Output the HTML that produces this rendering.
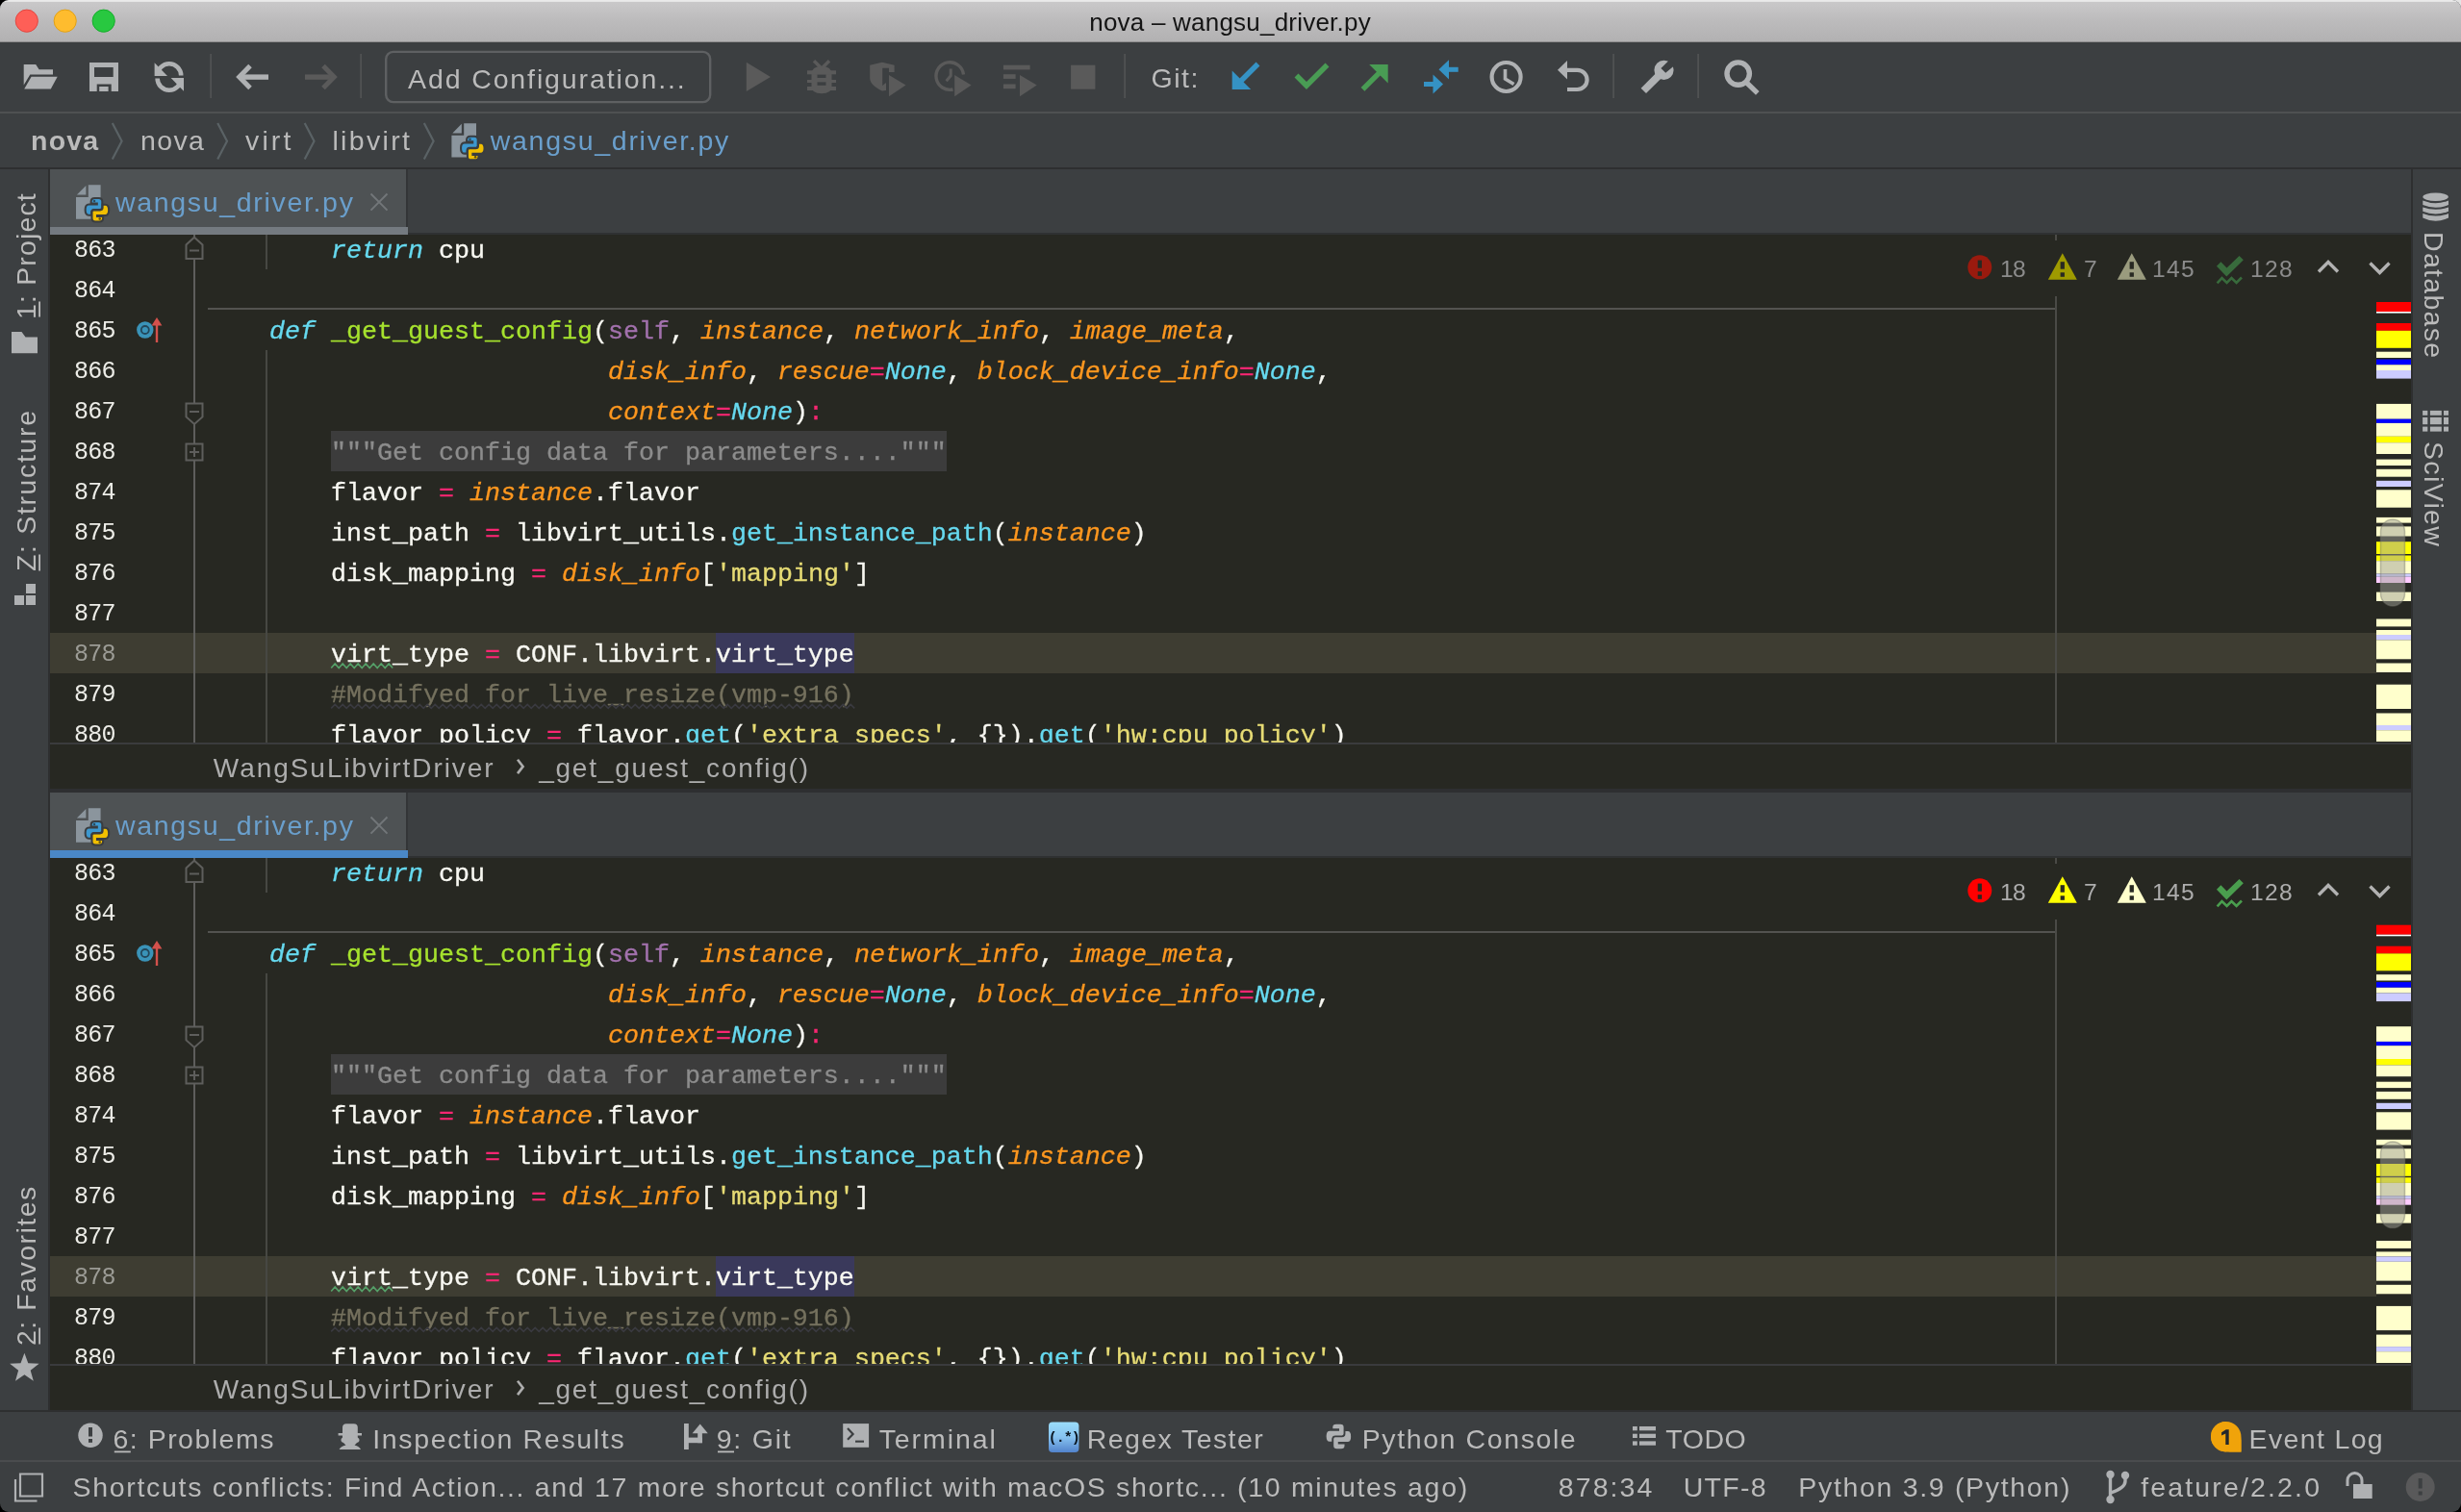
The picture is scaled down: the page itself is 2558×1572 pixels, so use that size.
<!DOCTYPE html>
<html><head><meta charset="utf-8"><title>nova – wangsu_driver.py</title>
<style>html,body{margin:0;padding:0;width:2558px;height:1572px;overflow:hidden;background:#000000}</style>
</head><body>
<div style="position:absolute;left:2538px;top:0;width:20px;height:20px;background:#e4e4e4"></div><div style="position:absolute;left:0;top:0;width:2558px;height:1572px;background:#3C3F41;border-radius:9px;overflow:hidden;will-change:transform"><div style="position:absolute;left:0px;top:0px;width:2558px;height:44px;background:linear-gradient(#ececec 0px,#e6e6e6 1.5px,#c9c8c9 2.5px,#bdbcbd 20px,#b2b1b2 43px);"></div><div style="position:absolute;left:0px;top:43px;width:2558px;height:1px;background:#8e8d8e;"></div><svg style="position:absolute;left:13px;top:8px" width="28" height="28" viewBox="0 0 28 28"><circle cx="14.8" cy="13.7" r="11.6" fill="#fe5f57" stroke="#e2463f" stroke-width="1"/></svg><svg style="position:absolute;left:53px;top:8px" width="28" height="28" viewBox="0 0 28 28"><circle cx="14.700000000000003" cy="13.7" r="11.6" fill="#febc2e" stroke="#e1a116" stroke-width="1"/></svg><svg style="position:absolute;left:93px;top:8px" width="28" height="28" viewBox="0 0 28 28"><circle cx="14.700000000000003" cy="13.7" r="11.6" fill="#28c840" stroke="#14ae2a" stroke-width="1"/></svg><div style="position:absolute;font-family:'Liberation Sans', sans-serif;font-size:26px;line-height:26px;height:26px;color:#141414;font-weight:400;white-space:pre;letter-spacing:0.218px;left:1132.23px;top:10.19px;">nova – wangsu_driver.py</div><div style="position:absolute;left:0px;top:116px;width:2558px;height:2px;background:#4f5152;"></div><div style="position:absolute;left:0px;top:174px;width:2558px;height:2px;background:#2E2F30;"></div><div style="position:absolute;left:50px;top:176px;width:2px;height:1290px;background:#2E2F30;"></div><div style="position:absolute;left:2506px;top:176px;width:2px;height:1290px;background:#2E2F30;"></div><div style="position:absolute;font-family:'Liberation Sans', sans-serif;font-size:28.5px;line-height:28.5px;height:28.5px;color:#BBBBBB;font-weight:400;white-space:pre;letter-spacing:1.883px;left:424.02px;top:68.17px;">Add Configuration...</div><div style="position:absolute;font-family:'Liberation Sans', sans-serif;font-size:28.5px;line-height:28.5px;height:28.5px;color:#BBBBBB;font-weight:400;white-space:pre;letter-spacing:1.584px;left:1196.42px;top:66.77px;">Git:</div><div style="position:absolute;font-family:'Liberation Sans', sans-serif;font-size:28.5px;line-height:28.5px;height:28.5px;color:#BBBBBB;font-weight:700;white-space:pre;letter-spacing:1.121px;left:32.12px;top:132.07px;">nova</div><div style="position:absolute;font-family:'Liberation Sans', sans-serif;font-size:28.5px;line-height:28.5px;height:28.5px;color:#BBBBBB;font-weight:400;white-space:pre;letter-spacing:1.361px;left:146.02px;top:132.07px;">nova</div><div style="position:absolute;font-family:'Liberation Sans', sans-serif;font-size:28.5px;line-height:28.5px;height:28.5px;color:#BBBBBB;font-weight:400;white-space:pre;letter-spacing:3.132px;left:255.02px;top:132.07px;">virt</div><div style="position:absolute;font-family:'Liberation Sans', sans-serif;font-size:28.5px;line-height:28.5px;height:28.5px;color:#BBBBBB;font-weight:400;white-space:pre;letter-spacing:2.330px;left:345.42px;top:132.07px;">libvirt</div><div style="position:absolute;font-family:'Liberation Sans', sans-serif;font-size:28.5px;line-height:28.5px;height:28.5px;color:#6A9FCC;font-weight:400;white-space:pre;letter-spacing:1.720px;left:509.72px;top:132.07px;">wangsu_driver.py</div><div style="position:absolute;left:52px;top:176px;width:370px;height:60px;background:#4E5254;"></div><div style="position:absolute;left:422px;top:176px;width:2px;height:60px;background:#333537;"></div><div style="position:absolute;left:52px;top:236px;width:372px;height:8px;background:#747A80;"></div><div style="position:absolute;left:424px;top:242px;width:2082px;height:2px;background:#2F3132;"></div><div style="position:absolute;font-family:'Liberation Sans', sans-serif;font-size:28.5px;line-height:28.5px;height:28.5px;color:#6A9FCC;font-weight:400;white-space:pre;letter-spacing:1.680px;left:119.92px;top:195.67px;">wangsu_driver.py</div><div style="position:absolute;left:52px;top:244px;width:2454px;height:528px;background:#272822;"></div><div style="position:absolute;left:52px;top:658px;width:2418px;height:42px;background:#3E3D32;"></div><div style="position:absolute;left:344.0px;top:448px;width:640.0px;height:42px;background:#3C3C3C;"></div><div style="position:absolute;left:744.0px;top:658px;width:144.0px;height:42px;background:#3A395B;"></div><div style="position:absolute;left:52px;top:244px;width:2418px;height:528px;overflow:hidden"><div style="position:absolute;left:25.0px;top:-4.2px;height:42px;line-height:42px;font-family:'Liberation Mono', monospace;font-size:25px;letter-spacing:-0.7px;color:#EDEDE8;white-space:pre">863</div><div style="position:absolute;left:164px;top:-4.5px;height:42px;line-height:42px;font-family:'Liberation Mono', monospace;font-size:26.67px;white-space:pre;-webkit-text-stroke:0.3px currentColor"><span style="color:#F8F8F2">        </span><span style="color:#66D9EF;font-style:italic">return</span><span style="color:#F8F8F2"> cpu</span></div><div style="position:absolute;left:25.0px;top:37.8px;height:42px;line-height:42px;font-family:'Liberation Mono', monospace;font-size:25px;letter-spacing:-0.7px;color:#EDEDE8;white-space:pre">864</div><div style="position:absolute;left:164px;top:37.5px;height:42px;line-height:42px;font-family:'Liberation Mono', monospace;font-size:26.67px;white-space:pre;-webkit-text-stroke:0.3px currentColor"></div><div style="position:absolute;left:25.0px;top:79.8px;height:42px;line-height:42px;font-family:'Liberation Mono', monospace;font-size:25px;letter-spacing:-0.7px;color:#EDEDE8;white-space:pre">865</div><div style="position:absolute;left:164px;top:79.5px;height:42px;line-height:42px;font-family:'Liberation Mono', monospace;font-size:26.67px;white-space:pre;-webkit-text-stroke:0.3px currentColor"><span style="color:#F8F8F2">    </span><span style="color:#66D9EF;font-style:italic">def</span><span style="color:#F8F8F2"> </span><span style="color:#A6E22E">_get_guest_config</span><span style="color:#F8F8F2">(</span><span style="color:#A271AD">self</span><span style="color:#F8F8F2">, </span><span style="color:#FD971F;font-style:italic">instance</span><span style="color:#F8F8F2">, </span><span style="color:#FD971F;font-style:italic">network_info</span><span style="color:#F8F8F2">, </span><span style="color:#FD971F;font-style:italic">image_meta</span><span style="color:#F8F8F2">,</span></div><div style="position:absolute;left:25.0px;top:121.8px;height:42px;line-height:42px;font-family:'Liberation Mono', monospace;font-size:25px;letter-spacing:-0.7px;color:#EDEDE8;white-space:pre">866</div><div style="position:absolute;left:164px;top:121.5px;height:42px;line-height:42px;font-family:'Liberation Mono', monospace;font-size:26.67px;white-space:pre;-webkit-text-stroke:0.3px currentColor"><span style="color:#F8F8F2">                          </span><span style="color:#FD971F;font-style:italic">disk_info</span><span style="color:#F8F8F2">, </span><span style="color:#FD971F;font-style:italic">rescue</span><span style="color:#F92672">=</span><span style="color:#66D9EF;font-style:italic">None</span><span style="color:#F8F8F2">, </span><span style="color:#FD971F;font-style:italic">block_device_info</span><span style="color:#F92672">=</span><span style="color:#66D9EF;font-style:italic">None</span><span style="color:#F8F8F2">,</span></div><div style="position:absolute;left:25.0px;top:163.8px;height:42px;line-height:42px;font-family:'Liberation Mono', monospace;font-size:25px;letter-spacing:-0.7px;color:#EDEDE8;white-space:pre">867</div><div style="position:absolute;left:164px;top:163.5px;height:42px;line-height:42px;font-family:'Liberation Mono', monospace;font-size:26.67px;white-space:pre;-webkit-text-stroke:0.3px currentColor"><span style="color:#F8F8F2">                          </span><span style="color:#FD971F;font-style:italic">context</span><span style="color:#F92672">=</span><span style="color:#66D9EF;font-style:italic">None</span><span style="color:#F8F8F2">)</span><span style="color:#F92672">:</span></div><div style="position:absolute;left:25.0px;top:205.8px;height:42px;line-height:42px;font-family:'Liberation Mono', monospace;font-size:25px;letter-spacing:-0.7px;color:#EDEDE8;white-space:pre">868</div><div style="position:absolute;left:164px;top:205.5px;height:42px;line-height:42px;font-family:'Liberation Mono', monospace;font-size:26.67px;white-space:pre;-webkit-text-stroke:0.3px currentColor"><span style="color:#F8F8F2">        </span><span style="color:#8C8C8C">"""Get config data for parameters...."""</span></div><div style="position:absolute;left:25.0px;top:247.8px;height:42px;line-height:42px;font-family:'Liberation Mono', monospace;font-size:25px;letter-spacing:-0.7px;color:#EDEDE8;white-space:pre">874</div><div style="position:absolute;left:164px;top:247.5px;height:42px;line-height:42px;font-family:'Liberation Mono', monospace;font-size:26.67px;white-space:pre;-webkit-text-stroke:0.3px currentColor"><span style="color:#F8F8F2">        flavor </span><span style="color:#F92672">=</span><span style="color:#F8F8F2"> </span><span style="color:#FD971F;font-style:italic">instance</span><span style="color:#F8F8F2">.flavor</span></div><div style="position:absolute;left:25.0px;top:289.8px;height:42px;line-height:42px;font-family:'Liberation Mono', monospace;font-size:25px;letter-spacing:-0.7px;color:#EDEDE8;white-space:pre">875</div><div style="position:absolute;left:164px;top:289.5px;height:42px;line-height:42px;font-family:'Liberation Mono', monospace;font-size:26.67px;white-space:pre;-webkit-text-stroke:0.3px currentColor"><span style="color:#F8F8F2">        inst_path </span><span style="color:#F92672">=</span><span style="color:#F8F8F2"> libvirt_utils.</span><span style="color:#66D9EF">get_instance_path</span><span style="color:#F8F8F2">(</span><span style="color:#FD971F;font-style:italic">instance</span><span style="color:#F8F8F2">)</span></div><div style="position:absolute;left:25.0px;top:331.8px;height:42px;line-height:42px;font-family:'Liberation Mono', monospace;font-size:25px;letter-spacing:-0.7px;color:#EDEDE8;white-space:pre">876</div><div style="position:absolute;left:164px;top:331.5px;height:42px;line-height:42px;font-family:'Liberation Mono', monospace;font-size:26.67px;white-space:pre;-webkit-text-stroke:0.3px currentColor"><span style="color:#F8F8F2">        disk_mapping </span><span style="color:#F92672">=</span><span style="color:#F8F8F2"> </span><span style="color:#FD971F;font-style:italic">disk_info</span><span style="color:#F8F8F2">[</span><span style="color:#E6DB74">'mapping'</span><span style="color:#F8F8F2">]</span></div><div style="position:absolute;left:25.0px;top:373.8px;height:42px;line-height:42px;font-family:'Liberation Mono', monospace;font-size:25px;letter-spacing:-0.7px;color:#EDEDE8;white-space:pre">877</div><div style="position:absolute;left:164px;top:373.5px;height:42px;line-height:42px;font-family:'Liberation Mono', monospace;font-size:26.67px;white-space:pre;-webkit-text-stroke:0.3px currentColor"></div><div style="position:absolute;left:25.0px;top:415.8px;height:42px;line-height:42px;font-family:'Liberation Mono', monospace;font-size:25px;letter-spacing:-0.7px;color:#9C9C96;white-space:pre">878</div><div style="position:absolute;left:164px;top:415.5px;height:42px;line-height:42px;font-family:'Liberation Mono', monospace;font-size:26.67px;white-space:pre;-webkit-text-stroke:0.3px currentColor"><span style="color:#F8F8F2">        virt_type </span><span style="color:#F92672">=</span><span style="color:#F8F8F2"> CONF.libvirt.</span><span style="color:#F8F8F2">virt_type</span></div><div style="position:absolute;left:25.0px;top:457.8px;height:42px;line-height:42px;font-family:'Liberation Mono', monospace;font-size:25px;letter-spacing:-0.7px;color:#EDEDE8;white-space:pre">879</div><div style="position:absolute;left:164px;top:457.5px;height:42px;line-height:42px;font-family:'Liberation Mono', monospace;font-size:26.67px;white-space:pre;-webkit-text-stroke:0.3px currentColor"><span style="color:#F8F8F2">        </span><span style="color:#75715E">#Modifyed for live_resize(vmp-916)</span></div><div style="position:absolute;left:25.0px;top:499.8px;height:42px;line-height:42px;font-family:'Liberation Mono', monospace;font-size:25px;letter-spacing:-0.7px;color:#EDEDE8;white-space:pre">880</div><div style="position:absolute;left:164px;top:499.5px;height:42px;line-height:42px;font-family:'Liberation Mono', monospace;font-size:26.67px;white-space:pre;-webkit-text-stroke:0.3px currentColor"><span style="color:#F8F8F2">        flavor_policy </span><span style="color:#F92672">=</span><span style="color:#F8F8F2"> flavor.</span><span style="color:#66D9EF">get</span><span style="color:#F8F8F2">(</span><span style="color:#E6DB74">'extra_specs'</span><span style="color:#F8F8F2">, {}).</span><span style="color:#66D9EF">get</span><span style="color:#F8F8F2">(</span><span style="color:#E6DB74">'hw:cpu_policy'</span><span style="color:#F8F8F2">)</span></div></div><div style="position:absolute;left:2030px;top:250px;width:470px;height:58px;background:#272822;"></div><div style="position:absolute;font-family:'Liberation Sans', sans-serif;font-size:24.6px;line-height:24.6px;height:24.6px;color:#8C8C8C;font-weight:400;white-space:pre;letter-spacing:-0.637px;left:2078.89px;top:268.38px;">18</div><div style="position:absolute;font-family:'Liberation Sans', sans-serif;font-size:24.6px;line-height:24.6px;height:24.6px;color:#8C8C8C;font-weight:400;white-space:pre;letter-spacing:0.000px;left:2165.89px;top:268.38px;">7</div><div style="position:absolute;font-family:'Liberation Sans', sans-serif;font-size:24.6px;line-height:24.6px;height:24.6px;color:#8C8C8C;font-weight:400;white-space:pre;letter-spacing:1.338px;left:2236.89px;top:268.38px;">145</div><div style="position:absolute;font-family:'Liberation Sans', sans-serif;font-size:24.6px;line-height:24.6px;height:24.6px;color:#8C8C8C;font-weight:400;white-space:pre;letter-spacing:1.338px;left:2338.89px;top:268.38px;">128</div><div style="position:absolute;left:52px;top:772px;width:2454px;height:2px;background:#3A3B3D;"></div><div style="position:absolute;left:52px;top:774px;width:2454px;height:46px;background:#272822;"></div><div style="position:absolute;font-family:'Liberation Sans', sans-serif;font-size:28px;line-height:28px;height:28px;color:#ADADAD;font-weight:400;white-space:pre;letter-spacing:1.952px;left:221.84px;top:784.50px;">WangSuLibvirtDriver</div><div style="position:absolute;font-family:'Liberation Sans', sans-serif;font-size:28px;line-height:28px;height:28px;color:#ADADAD;font-weight:400;white-space:pre;letter-spacing:1.802px;left:560.14px;top:784.50px;">_get_guest_config()</div><div style="position:absolute;left:52px;top:820px;width:2454px;height:4px;background:#2E2F31;"></div><div style="position:absolute;left:52px;top:824px;width:370px;height:60px;background:#4E5254;"></div><div style="position:absolute;left:422px;top:824px;width:2px;height:60px;background:#333537;"></div><div style="position:absolute;left:52px;top:884px;width:372px;height:8px;background:#4A88C7;"></div><div style="position:absolute;left:424px;top:890px;width:2082px;height:2px;background:#2F3132;"></div><div style="position:absolute;font-family:'Liberation Sans', sans-serif;font-size:28.5px;line-height:28.5px;height:28.5px;color:#6A9FCC;font-weight:400;white-space:pre;letter-spacing:1.680px;left:119.92px;top:843.67px;">wangsu_driver.py</div><div style="position:absolute;left:52px;top:892px;width:2454px;height:526px;background:#272822;"></div><div style="position:absolute;left:52px;top:1306px;width:2418px;height:42px;background:#3E3D32;"></div><div style="position:absolute;left:344.0px;top:1096px;width:640.0px;height:42px;background:#3C3C3C;"></div><div style="position:absolute;left:744.0px;top:1306px;width:144.0px;height:42px;background:#3A395B;"></div><div style="position:absolute;left:52px;top:892px;width:2418px;height:526px;overflow:hidden"><div style="position:absolute;left:25.0px;top:-4.2px;height:42px;line-height:42px;font-family:'Liberation Mono', monospace;font-size:25px;letter-spacing:-0.7px;color:#EDEDE8;white-space:pre">863</div><div style="position:absolute;left:164px;top:-4.5px;height:42px;line-height:42px;font-family:'Liberation Mono', monospace;font-size:26.67px;white-space:pre;-webkit-text-stroke:0.3px currentColor"><span style="color:#F8F8F2">        </span><span style="color:#66D9EF;font-style:italic">return</span><span style="color:#F8F8F2"> cpu</span></div><div style="position:absolute;left:25.0px;top:37.8px;height:42px;line-height:42px;font-family:'Liberation Mono', monospace;font-size:25px;letter-spacing:-0.7px;color:#EDEDE8;white-space:pre">864</div><div style="position:absolute;left:164px;top:37.5px;height:42px;line-height:42px;font-family:'Liberation Mono', monospace;font-size:26.67px;white-space:pre;-webkit-text-stroke:0.3px currentColor"></div><div style="position:absolute;left:25.0px;top:79.8px;height:42px;line-height:42px;font-family:'Liberation Mono', monospace;font-size:25px;letter-spacing:-0.7px;color:#EDEDE8;white-space:pre">865</div><div style="position:absolute;left:164px;top:79.5px;height:42px;line-height:42px;font-family:'Liberation Mono', monospace;font-size:26.67px;white-space:pre;-webkit-text-stroke:0.3px currentColor"><span style="color:#F8F8F2">    </span><span style="color:#66D9EF;font-style:italic">def</span><span style="color:#F8F8F2"> </span><span style="color:#A6E22E">_get_guest_config</span><span style="color:#F8F8F2">(</span><span style="color:#A271AD">self</span><span style="color:#F8F8F2">, </span><span style="color:#FD971F;font-style:italic">instance</span><span style="color:#F8F8F2">, </span><span style="color:#FD971F;font-style:italic">network_info</span><span style="color:#F8F8F2">, </span><span style="color:#FD971F;font-style:italic">image_meta</span><span style="color:#F8F8F2">,</span></div><div style="position:absolute;left:25.0px;top:121.8px;height:42px;line-height:42px;font-family:'Liberation Mono', monospace;font-size:25px;letter-spacing:-0.7px;color:#EDEDE8;white-space:pre">866</div><div style="position:absolute;left:164px;top:121.5px;height:42px;line-height:42px;font-family:'Liberation Mono', monospace;font-size:26.67px;white-space:pre;-webkit-text-stroke:0.3px currentColor"><span style="color:#F8F8F2">                          </span><span style="color:#FD971F;font-style:italic">disk_info</span><span style="color:#F8F8F2">, </span><span style="color:#FD971F;font-style:italic">rescue</span><span style="color:#F92672">=</span><span style="color:#66D9EF;font-style:italic">None</span><span style="color:#F8F8F2">, </span><span style="color:#FD971F;font-style:italic">block_device_info</span><span style="color:#F92672">=</span><span style="color:#66D9EF;font-style:italic">None</span><span style="color:#F8F8F2">,</span></div><div style="position:absolute;left:25.0px;top:163.8px;height:42px;line-height:42px;font-family:'Liberation Mono', monospace;font-size:25px;letter-spacing:-0.7px;color:#EDEDE8;white-space:pre">867</div><div style="position:absolute;left:164px;top:163.5px;height:42px;line-height:42px;font-family:'Liberation Mono', monospace;font-size:26.67px;white-space:pre;-webkit-text-stroke:0.3px currentColor"><span style="color:#F8F8F2">                          </span><span style="color:#FD971F;font-style:italic">context</span><span style="color:#F92672">=</span><span style="color:#66D9EF;font-style:italic">None</span><span style="color:#F8F8F2">)</span><span style="color:#F92672">:</span></div><div style="position:absolute;left:25.0px;top:205.8px;height:42px;line-height:42px;font-family:'Liberation Mono', monospace;font-size:25px;letter-spacing:-0.7px;color:#EDEDE8;white-space:pre">868</div><div style="position:absolute;left:164px;top:205.5px;height:42px;line-height:42px;font-family:'Liberation Mono', monospace;font-size:26.67px;white-space:pre;-webkit-text-stroke:0.3px currentColor"><span style="color:#F8F8F2">        </span><span style="color:#8C8C8C">"""Get config data for parameters...."""</span></div><div style="position:absolute;left:25.0px;top:247.8px;height:42px;line-height:42px;font-family:'Liberation Mono', monospace;font-size:25px;letter-spacing:-0.7px;color:#EDEDE8;white-space:pre">874</div><div style="position:absolute;left:164px;top:247.5px;height:42px;line-height:42px;font-family:'Liberation Mono', monospace;font-size:26.67px;white-space:pre;-webkit-text-stroke:0.3px currentColor"><span style="color:#F8F8F2">        flavor </span><span style="color:#F92672">=</span><span style="color:#F8F8F2"> </span><span style="color:#FD971F;font-style:italic">instance</span><span style="color:#F8F8F2">.flavor</span></div><div style="position:absolute;left:25.0px;top:289.8px;height:42px;line-height:42px;font-family:'Liberation Mono', monospace;font-size:25px;letter-spacing:-0.7px;color:#EDEDE8;white-space:pre">875</div><div style="position:absolute;left:164px;top:289.5px;height:42px;line-height:42px;font-family:'Liberation Mono', monospace;font-size:26.67px;white-space:pre;-webkit-text-stroke:0.3px currentColor"><span style="color:#F8F8F2">        inst_path </span><span style="color:#F92672">=</span><span style="color:#F8F8F2"> libvirt_utils.</span><span style="color:#66D9EF">get_instance_path</span><span style="color:#F8F8F2">(</span><span style="color:#FD971F;font-style:italic">instance</span><span style="color:#F8F8F2">)</span></div><div style="position:absolute;left:25.0px;top:331.8px;height:42px;line-height:42px;font-family:'Liberation Mono', monospace;font-size:25px;letter-spacing:-0.7px;color:#EDEDE8;white-space:pre">876</div><div style="position:absolute;left:164px;top:331.5px;height:42px;line-height:42px;font-family:'Liberation Mono', monospace;font-size:26.67px;white-space:pre;-webkit-text-stroke:0.3px currentColor"><span style="color:#F8F8F2">        disk_mapping </span><span style="color:#F92672">=</span><span style="color:#F8F8F2"> </span><span style="color:#FD971F;font-style:italic">disk_info</span><span style="color:#F8F8F2">[</span><span style="color:#E6DB74">'mapping'</span><span style="color:#F8F8F2">]</span></div><div style="position:absolute;left:25.0px;top:373.8px;height:42px;line-height:42px;font-family:'Liberation Mono', monospace;font-size:25px;letter-spacing:-0.7px;color:#EDEDE8;white-space:pre">877</div><div style="position:absolute;left:164px;top:373.5px;height:42px;line-height:42px;font-family:'Liberation Mono', monospace;font-size:26.67px;white-space:pre;-webkit-text-stroke:0.3px currentColor"></div><div style="position:absolute;left:25.0px;top:415.8px;height:42px;line-height:42px;font-family:'Liberation Mono', monospace;font-size:25px;letter-spacing:-0.7px;color:#9C9C96;white-space:pre">878</div><div style="position:absolute;left:164px;top:415.5px;height:42px;line-height:42px;font-family:'Liberation Mono', monospace;font-size:26.67px;white-space:pre;-webkit-text-stroke:0.3px currentColor"><span style="color:#F8F8F2">        virt_type </span><span style="color:#F92672">=</span><span style="color:#F8F8F2"> CONF.libvirt.</span><span style="color:#F8F8F2">virt_type</span></div><div style="position:absolute;left:25.0px;top:457.8px;height:42px;line-height:42px;font-family:'Liberation Mono', monospace;font-size:25px;letter-spacing:-0.7px;color:#EDEDE8;white-space:pre">879</div><div style="position:absolute;left:164px;top:457.5px;height:42px;line-height:42px;font-family:'Liberation Mono', monospace;font-size:26.67px;white-space:pre;-webkit-text-stroke:0.3px currentColor"><span style="color:#F8F8F2">        </span><span style="color:#75715E">#Modifyed for live_resize(vmp-916)</span></div><div style="position:absolute;left:25.0px;top:499.8px;height:42px;line-height:42px;font-family:'Liberation Mono', monospace;font-size:25px;letter-spacing:-0.7px;color:#EDEDE8;white-space:pre">880</div><div style="position:absolute;left:164px;top:499.5px;height:42px;line-height:42px;font-family:'Liberation Mono', monospace;font-size:26.67px;white-space:pre;-webkit-text-stroke:0.3px currentColor"><span style="color:#F8F8F2">        flavor_policy </span><span style="color:#F92672">=</span><span style="color:#F8F8F2"> flavor.</span><span style="color:#66D9EF">get</span><span style="color:#F8F8F2">(</span><span style="color:#E6DB74">'extra_specs'</span><span style="color:#F8F8F2">, {}).</span><span style="color:#66D9EF">get</span><span style="color:#F8F8F2">(</span><span style="color:#E6DB74">'hw:cpu_policy'</span><span style="color:#F8F8F2">)</span></div></div><div style="position:absolute;left:2030px;top:898px;width:470px;height:58px;background:#272822;"></div><div style="position:absolute;font-family:'Liberation Sans', sans-serif;font-size:24.6px;line-height:24.6px;height:24.6px;color:#ADADAD;font-weight:400;white-space:pre;letter-spacing:-0.637px;left:2078.89px;top:916.38px;">18</div><div style="position:absolute;font-family:'Liberation Sans', sans-serif;font-size:24.6px;line-height:24.6px;height:24.6px;color:#ADADAD;font-weight:400;white-space:pre;letter-spacing:0.000px;left:2165.89px;top:916.38px;">7</div><div style="position:absolute;font-family:'Liberation Sans', sans-serif;font-size:24.6px;line-height:24.6px;height:24.6px;color:#ADADAD;font-weight:400;white-space:pre;letter-spacing:1.338px;left:2236.89px;top:916.38px;">145</div><div style="position:absolute;font-family:'Liberation Sans', sans-serif;font-size:24.6px;line-height:24.6px;height:24.6px;color:#ADADAD;font-weight:400;white-space:pre;letter-spacing:1.338px;left:2338.89px;top:916.38px;">128</div><div style="position:absolute;left:52px;top:1418px;width:2454px;height:2px;background:#3A3B3D;"></div><div style="position:absolute;left:52px;top:1420px;width:2454px;height:46px;background:#272822;"></div><div style="position:absolute;font-family:'Liberation Sans', sans-serif;font-size:28px;line-height:28px;height:28px;color:#ADADAD;font-weight:400;white-space:pre;letter-spacing:1.952px;left:221.84px;top:1430.50px;">WangSuLibvirtDriver</div><div style="position:absolute;font-family:'Liberation Sans', sans-serif;font-size:28px;line-height:28px;height:28px;color:#ADADAD;font-weight:400;white-space:pre;letter-spacing:1.802px;left:560.14px;top:1430.50px;">_get_guest_config()</div><div style="position:absolute;font-family:'Liberation Sans', sans-serif;font-size:28.5px;line-height:28.5px;height:28.5px;color:#BBBBBB;font-weight:400;white-space:pre;letter-spacing:1.156px;left:12.98px;top:332.08px;transform-origin:0 0;transform:rotate(-90deg);">1: Project</div><div style="position:absolute;font-family:'Liberation Sans', sans-serif;font-size:28.5px;line-height:28.5px;height:28.5px;color:#BBBBBB;font-weight:400;white-space:pre;letter-spacing:1.656px;left:12.98px;top:593.98px;transform-origin:0 0;transform:rotate(-90deg);">Z: Structure</div><div style="position:absolute;font-family:'Liberation Sans', sans-serif;font-size:28.5px;line-height:28.5px;height:28.5px;color:#BBBBBB;font-weight:400;white-space:pre;letter-spacing:1.491px;left:12.98px;top:1398.58px;transform-origin:0 0;transform:rotate(-90deg);">2: Favorites</div><div style="position:absolute;font-family:'Liberation Sans', sans-serif;font-size:28.5px;line-height:28.5px;height:28.5px;color:#BBBBBB;font-weight:400;white-space:pre;letter-spacing:1.311px;left:2544.22px;top:241.22px;transform-origin:0 0;transform:rotate(90deg);">Database</div><div style="position:absolute;font-family:'Liberation Sans', sans-serif;font-size:28.5px;line-height:28.5px;height:28.5px;color:#BBBBBB;font-weight:400;white-space:pre;letter-spacing:1.339px;left:2544.22px;top:459.32px;transform-origin:0 0;transform:rotate(90deg);">SciView</div><div style="position:absolute;left:0px;top:1466px;width:2558px;height:2px;background:#2E2F30;"></div><div style="position:absolute;left:0px;top:1518px;width:2558px;height:2px;background:#4A4C4E;"></div><div style="position:absolute;font-family:'Liberation Sans', sans-serif;font-size:28.5px;line-height:28.5px;height:28.5px;color:#BBBBBB;font-weight:400;white-space:pre;letter-spacing:1.483px;left:117.52px;top:1482.37px;">6: Problems</div><div style="position:absolute;font-family:'Liberation Sans', sans-serif;font-size:28.5px;line-height:28.5px;height:28.5px;color:#BBBBBB;font-weight:400;white-space:pre;letter-spacing:1.684px;left:387.22px;top:1482.37px;">Inspection Results</div><div style="position:absolute;font-family:'Liberation Sans', sans-serif;font-size:28.5px;line-height:28.5px;height:28.5px;color:#BBBBBB;font-weight:400;white-space:pre;letter-spacing:1.777px;left:744.72px;top:1482.37px;">9: Git</div><div style="position:absolute;font-family:'Liberation Sans', sans-serif;font-size:28.5px;line-height:28.5px;height:28.5px;color:#BBBBBB;font-weight:400;white-space:pre;letter-spacing:1.899px;left:913.72px;top:1482.37px;">Terminal</div><div style="position:absolute;font-family:'Liberation Sans', sans-serif;font-size:28.5px;line-height:28.5px;height:28.5px;color:#BBBBBB;font-weight:400;white-space:pre;letter-spacing:1.417px;left:1129.72px;top:1482.37px;">Regex Tester</div><div style="position:absolute;font-family:'Liberation Sans', sans-serif;font-size:28.5px;line-height:28.5px;height:28.5px;color:#BBBBBB;font-weight:400;white-space:pre;letter-spacing:1.598px;left:1415.72px;top:1482.37px;">Python Console</div><div style="position:absolute;font-family:'Liberation Sans', sans-serif;font-size:28.5px;line-height:28.5px;height:28.5px;color:#BBBBBB;font-weight:400;white-space:pre;letter-spacing:0.528px;left:1731.32px;top:1482.37px;">TODO</div><div style="position:absolute;font-family:'Liberation Sans', sans-serif;font-size:28.5px;line-height:28.5px;height:28.5px;color:#BBBBBB;font-weight:400;white-space:pre;letter-spacing:1.354px;left:2337.52px;top:1482.37px;">Event Log</div><div style="position:absolute;font-family:'Liberation Sans', sans-serif;font-size:28.5px;line-height:28.5px;height:28.5px;color:#BBBBBB;font-weight:400;white-space:pre;letter-spacing:1.679px;left:75.62px;top:1531.87px;">Shortcuts conflicts: Find Action... and 17 more shortcut conflict with macOS shortc... (10 minutes ago)</div><div style="position:absolute;font-family:'Liberation Sans', sans-serif;font-size:28.5px;line-height:28.5px;height:28.5px;color:#BBBBBB;font-weight:400;white-space:pre;letter-spacing:2.105px;left:1619.72px;top:1531.87px;">878:34</div><div style="position:absolute;font-family:'Liberation Sans', sans-serif;font-size:28.5px;line-height:28.5px;height:28.5px;color:#BBBBBB;font-weight:400;white-space:pre;letter-spacing:1.311px;left:1749.72px;top:1531.87px;">UTF-8</div><div style="position:absolute;font-family:'Liberation Sans', sans-serif;font-size:28.5px;line-height:28.5px;height:28.5px;color:#BBBBBB;font-weight:400;white-space:pre;letter-spacing:1.677px;left:1869.32px;top:1531.87px;">Python 3.9 (Python)</div><div style="position:absolute;font-family:'Liberation Sans', sans-serif;font-size:28.5px;line-height:28.5px;height:28.5px;color:#BBBBBB;font-weight:400;white-space:pre;letter-spacing:2.146px;left:2225.22px;top:1531.87px;">feature/2.2.0</div>
<svg style="position:absolute;left:0;top:0" width="2558" height="1572" viewBox="0 0 2558 1572"><path d="M24.7 67 H37.2 L40.6 72.2 H55 V77.4 H31.3 L24.7 88.5 Z" fill="#AFB1B3"/><path d="M32.6 79.8 H59.7 L52.8 92.6 H25.2 Z" fill="#AFB1B3"/><path fill-rule="evenodd" d="M93 65 H123 V95 H93 Z M98 70 H117.7 V80 H98 Z M100.7 87.5 H115.7 V95 H100.7 Z" fill="#AFB1B3"/><rect x="103.2" y="90" width="9.4" height="5" fill="#AFB1B3"/><path d="M163.6 78.5 A12.3 12.3 0 0 1 188.2 78.5" fill="none" stroke="#AFB1B3" stroke-width="4.6"/><path d="M188.2 81.5 A12.3 12.3 0 0 1 163.6 81.5" fill="none" stroke="#AFB1B3" stroke-width="4.6"/><path d="M160.6 65.3 V79 H174 Z" fill="#AFB1B3"/><path d="M191 94.8 V81 H177.6 Z" fill="#AFB1B3"/><rect x="218.2" y="56" width="1.8" height="46" fill="#505253"/><rect x="374.2" y="56" width="1.8" height="46" fill="#505253"/><rect x="1168.2" y="56" width="1.8" height="46" fill="#505253"/><rect x="1676.2" y="56" width="1.8" height="46" fill="#505253"/><rect x="1764.2" y="56" width="1.8" height="46" fill="#505253"/><path d="M279 80.1 H251" stroke="#AFB1B3" stroke-width="5.4"/><path d="M260 68.6 L248.7 80 L260 91.4" fill="none" stroke="#AFB1B3" stroke-width="5"/><path d="M317 80.1 H345" stroke="#5A5A5A" stroke-width="5.4"/><path d="M336 68.6 L347.3 80 L336 91.4" fill="none" stroke="#5A5A5A" stroke-width="5"/><rect x="401.2" y="53.9" width="337" height="52.2" rx="7.5" fill="none" stroke="#5E6062" stroke-width="2.4"/><path d="M775.8 64.8 L800.9 79.9 L775.8 94.9 Z" fill="#5A5A5A"/><path d="M846 63.3 L854 71.3 L862 63.3" fill="none" stroke="#5A5A5A" stroke-width="3.4"/><path d="M843.5 77 Q843.5 69 854 69 Q864.5 69 864.5 77 V90 Q864.5 97.3 854 97.3 Q843.5 97.3 843.5 90 Z" fill="#5A5A5A"/><g fill="#5A5A5A"><rect x="839" y="73.3" width="30" height="4"/><rect x="839" y="83" width="30" height="3"/><rect x="839" y="90" width="30" height="4"/></g><g fill="#3C3F41"><rect x="849.5" y="77.6" width="9" height="3.4"/><rect x="849.5" y="85.4" width="9" height="3.4"/></g><path d="M904.2 67.7 L916.9 64.8 L929.6 67.7 V75 H924 V70.8 L917.2 70.8 V89 L921 86 V94 L916.9 94.6 C910 91 904.2 87 904.2 81 Z" fill="#5A5A5A"/><path d="M924 78 L941.5 88.6 L924 100.2 Z" fill="#5A5A5A"/><path d="M990.5 93 A14.3 14.3 0 1 1 1001.5 77.5" fill="none" stroke="#5A5A5A" stroke-width="3.4"/><path d="M988.2 71.6 V78.8 L983.6 84.3" fill="none" stroke="#5A5A5A" stroke-width="3"/><path d="M992.2 78 L1009.6 88.6 L992.2 100.2 Z" fill="#5A5A5A"/><g fill="#5A5A5A"><rect x="1042.9" y="67.7" width="27.7" height="4.7"/><rect x="1042.9" y="77.2" width="12.7" height="4.7"/><rect x="1042.9" y="87.5" width="12.7" height="4.7"/></g><path d="M1060 78 L1077.7 88.6 L1060 100.2 Z" fill="#5A5A5A"/><rect x="1113.1" y="67.7" width="25.3" height="25" fill="#5A5A5A"/><path d="M1307.5 66.5 L1289.5 84.5" stroke="#3592C4" stroke-width="5.4"/><path d="M1280.7 73.5 V93 H1300.2 Z" fill="#3592C4"/><path d="M1347.5 78.5 L1358 89 L1379.5 67.5" fill="none" stroke="#499C54" stroke-width="5.6"/><path d="M1416.5 92.8 L1434.5 74.8" stroke="#499C54" stroke-width="5.4"/><path d="M1442.7 67 V86.5 L1423.2 67 Z" fill="#499C54"/><path d="M1505 72.3 H1515.7" stroke="#3592C4" stroke-width="5"/><path d="M1495.5 72.3 L1506 62.2 V82.4 Z" fill="#3592C4"/><path d="M1490.5 87.5 H1480" stroke="#3592C4" stroke-width="5"/><path d="M1500 87.5 L1489.5 77.4 V97.6 Z" fill="#3592C4"/><path d="M1497 76 L1499 84" stroke="#3592C4" stroke-width="0"/><circle cx="1565.6" cy="80" r="15" fill="none" stroke="#AFB1B3" stroke-width="4.2"/><path d="M1564.5 72 V82 L1573.5 87.5" fill="none" stroke="#AFB1B3" stroke-width="3.6"/><path d="M1626 72.8 H1639.5 A10.1 10.1 0 0 1 1639.5 93 H1629" fill="none" stroke="#AFB1B3" stroke-width="4.2"/><path d="M1619 72.8 L1629 63 V82.6 Z" fill="#AFB1B3"/><path d="M1708.3 94.4 L1724 78.7" stroke="#AFB1B3" stroke-width="7.6"/><circle cx="1729.5" cy="72.8" r="10.1" fill="#AFB1B3"/><path d="M1726.46 71.04 L1735.59 61.91 L1741.2 67.5 L1731.26 75.84 Z" fill="#3C3F41"/><circle cx="1806.7" cy="76.6" r="11.7" fill="none" stroke="#AFB1B3" stroke-width="5.4"/><path d="M1814.5 85 L1826.8 96.8" stroke="#AFB1B3" stroke-width="5.2"/><path d="M116.8 128 L126.6 146.8 L116.8 165.6" fill="none" stroke="#5A6265" stroke-width="2.2"/><path d="M226.20000000000002 128 L236.0 146.8 L226.20000000000002 165.6" fill="none" stroke="#5A6265" stroke-width="2.2"/><path d="M316.7 128 L326.5 146.8 L316.7 165.6" fill="none" stroke="#5A6265" stroke-width="2.2"/><path d="M440.8 128 L450.6 146.8 L440.8 165.6" fill="none" stroke="#5A6265" stroke-width="2.2"/><g transform="translate(469.4,128.2)"><path d="M12.8 0 H25.6 V35.4 H0 V12.6 H12.8 Z" fill="#8B959D"/><path d="M0.9 10.2 L10.4 0.6 V10.2 Z" fill="#8B959D"/><g transform="translate(8.9,12.9) scale(1.04)"><path d="M6.5 4.2 Q6.5 0.7 10.2 0.7 H14.2 Q17.7 0.7 17.7 4.2 V10.2 Q17.7 12.3 15.6 12.3 H9.6 Q7 12.3 7 15 V17.8 H4.2 Q0.7 17.8 0.7 12.3 Q0.7 7 4.4 7 H12.4 V6 H6.5 Z" fill="#3D98CF" stroke="#3A3D40" stroke-width="2"/><path d="M18.5 20.8 Q18.5 24.3 14.8 24.3 H10.8 Q7.3 24.3 7.3 20.8 V14.8 Q7.3 12.7 9.4 12.7 H15.4 Q18 12.7 18 10 V7.2 H20.8 Q24.3 7.2 24.3 12.7 Q24.3 18 20.6 18 H12.6 V19 H18.5 Z" fill="#F1BF00" stroke="#3A3D40" stroke-width="2"/><circle cx="9.8" cy="3.6" r="1.2" fill="#2C4C60"/><circle cx="15.2" cy="21.4" r="1.2" fill="#5E4E10"/></g></g><g transform="translate(79,192.3)"><path d="M12.8 0 H25.6 V35.4 H0 V12.6 H12.8 Z" fill="#8B959D"/><path d="M0.9 10.2 L10.4 0.6 V10.2 Z" fill="#8B959D"/><g transform="translate(8.9,12.9) scale(1.04)"><path d="M6.5 4.2 Q6.5 0.7 10.2 0.7 H14.2 Q17.7 0.7 17.7 4.2 V10.2 Q17.7 12.3 15.6 12.3 H9.6 Q7 12.3 7 15 V17.8 H4.2 Q0.7 17.8 0.7 12.3 Q0.7 7 4.4 7 H12.4 V6 H6.5 Z" fill="#3D98CF" stroke="#3A3D40" stroke-width="2"/><path d="M18.5 20.8 Q18.5 24.3 14.8 24.3 H10.8 Q7.3 24.3 7.3 20.8 V14.8 Q7.3 12.7 9.4 12.7 H15.4 Q18 12.7 18 10 V7.2 H20.8 Q24.3 7.2 24.3 12.7 Q24.3 18 20.6 18 H12.6 V19 H18.5 Z" fill="#F1BF00" stroke="#3A3D40" stroke-width="2"/><circle cx="9.8" cy="3.6" r="1.2" fill="#2C4C60"/><circle cx="15.2" cy="21.4" r="1.2" fill="#5E4E10"/></g></g><path d="M385.5 201.5 L402.5 218.7 M402.5 201.5 L385.5 218.7" stroke="#727679" stroke-width="1.9"/><rect x="201" y="244" width="2" height="528" fill="#5E5E5C"/><path d="M202 246.7 L210.5 254.5 V269 H193.5 V254.5 Z" fill="#272822" stroke="#5E5E5C" stroke-width="2"/><path d="M197 260.5 H207" stroke="#5E5E5C" stroke-width="2"/><path d="M193.5 419.5 H210.5 V433.4 L202 441 L193.5 433.4 Z" fill="#272822" stroke="#5E5E5C" stroke-width="2"/><path d="M197 428 H207" stroke="#5E5E5C" stroke-width="2"/><rect x="193.5" y="461.5" width="17" height="17" fill="#272822" stroke="#5E5E5C" stroke-width="2"/><path d="M197 470 H207 M202 465 V475" stroke="#5E5E5C" stroke-width="2"/><circle cx="150.8" cy="343" r="8.7" fill="#3A93B8"/><circle cx="150.8" cy="343" r="4" fill="none" stroke="#23475A" stroke-width="1.8"/><path d="M163 337 V356" stroke="#D4514C" stroke-width="2.4"/><path d="M157.6 338.5 L163 330 L168.4 338.5 Z" fill="#D4514C"/><rect x="276" y="244" width="2" height="36" fill="#474843"/><rect x="276" y="364" width="2" height="408" fill="#474843"/><rect x="216" y="320" width="1921" height="2" fill="#535350"/><rect x="2136" y="244" width="2" height="6" fill="#4A4A46"/><rect x="2136" y="308" width="2" height="464" fill="#4A4A46"/><path d="M344.2 694.5 L348.2 690 L352.2 694.5 L356.2 690 L360.2 694.5 L364.2 690 L368.2 694.5 L372.2 690 L376.2 694.5 L380.2 690 L384.2 694.5 L388.2 690 L392.2 694.5 L396.2 690 L400.2 694.5 L404.2 690 L408.2 694.5 " fill="none" stroke="#55A068" stroke-width="1.7"/><path d="M344.2 736.4 L348.2 732.4 L352.2 736.4 L356.2 732.4 L360.2 736.4 L364.2 732.4 L368.2 736.4 L372.2 732.4 L376.2 736.4 L380.2 732.4 L384.2 736.4 L388.2 732.4 L392.2 736.4 L396.2 732.4 L400.2 736.4 L404.2 732.4 L408.2 736.4 L412.2 732.4 L416.2 736.4 L420.2 732.4 L424.2 736.4 L428.2 732.4 L432.2 736.4 L436.2 732.4 L440.2 736.4 L444.2 732.4 L448.2 736.4 L452.2 732.4 L456.2 736.4 L460.2 732.4 L464.2 736.4 L468.2 732.4 L472.2 736.4 L476.2 732.4 L480.2 736.4 L484.2 732.4 L488.2 736.4 L492.2 732.4 L496.2 736.4 L500.2 732.4 L504.2 736.4 L508.2 732.4 L512.2 736.4 L516.2 732.4 L520.2 736.4 L524.2 732.4 L528.2 736.4 L532.2 732.4 L536.2 736.4 L540.2 732.4 L544.2 736.4 L548.2 732.4 L552.2 736.4 L556.2 732.4 L560.2 736.4 L564.2 732.4 L568.2 736.4 L572.2 732.4 L576.2 736.4 L580.2 732.4 L584.2 736.4 L588.2 732.4 L592.2 736.4 L596.2 732.4 L600.2 736.4 L604.2 732.4 L608.2 736.4 L612.2 732.4 L616.2 736.4 L620.2 732.4 L624.2 736.4 L628.2 732.4 L632.2 736.4 L636.2 732.4 L640.2 736.4 L644.2 732.4 L648.2 736.4 L652.2 732.4 L656.2 736.4 L660.2 732.4 L664.2 736.4 L668.2 732.4 L672.2 736.4 L676.2 732.4 L680.2 736.4 L684.2 732.4 L688.2 736.4 L692.2 732.4 L696.2 736.4 L700.2 732.4 L704.2 736.4 L708.2 732.4 L712.2 736.4 L716.2 732.4 L720.2 736.4 L724.2 732.4 L728.2 736.4 L732.2 732.4 L736.2 736.4 L740.2 732.4 L744.2 736.4 L748.2 732.4 L752.2 736.4 L756.2 732.4 L760.2 736.4 L764.2 732.4 L768.2 736.4 L772.2 732.4 L776.2 736.4 L780.2 732.4 L784.2 736.4 L788.2 732.4 L792.2 736.4 L796.2 732.4 L800.2 736.4 L804.2 732.4 L808.2 736.4 L812.2 732.4 L816.2 736.4 L820.2 732.4 L824.2 736.4 L828.2 732.4 L832.2 736.4 L836.2 732.4 L840.2 736.4 L844.2 732.4 L848.2 736.4 L852.2 732.4 L856.2 736.4 L860.2 732.4 L864.2 736.4 L868.2 732.4 L872.2 736.4 L876.2 732.4 L880.2 736.4 L884.2 732.4 L888.2 736.4 " fill="none" stroke="#3A3A40" stroke-width="1.6"/><circle cx="2057.8" cy="277.8" r="12.5" fill="#9A1A0E"/><rect x="2055.7" y="270.6" width="4.2" height="8.1" fill="#272822"/><rect x="2055.7" y="282.2" width="4.2" height="4.6" fill="#272822"/><path d="M2143.8 263.3 L2158.8 290.8 H2128.8 Z" fill="#9E9A00"/><rect x="2141.6" y="272.2" width="4.3" height="7.5" fill="#272822"/><rect x="2141.6" y="283.3" width="4.3" height="4.5" fill="#272822"/><path d="M2215.8 263.3 L2230.8 290.8 H2200.8 Z" fill="#9A9B7E"/><rect x="2213.6" y="272.2" width="4.3" height="7.5" fill="#272822"/><rect x="2213.6" y="283.3" width="4.3" height="4.5" fill="#272822"/><path d="M2306.2 274.5 L2314.4 283 L2329.7 268.1" fill="none" stroke="#386B3C" stroke-width="6.2"/><path d="M2304.6 294.3 L2309.5 289 L2314.6 294 L2319.5 289 L2324.6 294 L2330 288.5" fill="none" stroke="#386B3C" stroke-width="2.6"/><path d="M2410 282.5 L2420 272.5 L2430 282.5" fill="none" stroke="#B2B2B2" stroke-width="3.4"/><path d="M2463.5 273.5 L2473.5 283.5 L2483.5 273.5" fill="none" stroke="#B2B2B2" stroke-width="3.4"/><rect x="2470" y="314.0" width="36" height="10.0" fill="#FF0000"/><rect x="2470" y="324.0" width="36" height="1.6" fill="#FFFFFF"/><rect x="2470" y="336.0" width="36" height="7.8" fill="#FF0000"/><rect x="2470" y="343.8" width="36" height="18.0" fill="#FFFF00"/><rect x="2470" y="365.7" width="36" height="6.3" fill="#FFFFCC"/><rect x="2470" y="373.6" width="36" height="5.7" fill="#0000FF"/><rect x="2470" y="379.3" width="36" height="5.7" fill="#FFFFCC"/><rect x="2470" y="385.0" width="36" height="8.6" fill="#CCCCFF"/><rect x="2470" y="419.9" width="36" height="15.8" fill="#FFFFCC"/><rect x="2470" y="435.7" width="36" height="4.2" fill="#0000FF"/><rect x="2470" y="439.9" width="36" height="13.9" fill="#FFFFCC"/><rect x="2470" y="453.8" width="36" height="6.4" fill="#FFFF00"/><rect x="2470" y="460.2" width="36" height="11.8" fill="#FFFFCC"/><rect x="2470" y="477.6" width="36" height="6.4" fill="#FFFFCC"/><rect x="2470" y="487.8" width="36" height="7.9" fill="#FFFFCC"/><rect x="2470" y="499.8" width="36" height="6.2" fill="#CCCCFF"/><rect x="2470" y="509.3" width="36" height="18.4" fill="#FFFFCC"/><rect x="2470" y="537.9" width="36" height="5.7" fill="#FFFFCC"/><rect x="2470" y="547.4" width="36" height="10.1" fill="#FFFFCC"/><rect x="2470" y="563.2" width="36" height="12.8" fill="#FFFF00"/><rect x="2470" y="577.5" width="36" height="5.7" fill="#FFFF00"/><rect x="2470" y="583.2" width="36" height="13.3" fill="#FFFFCC"/><rect x="2470" y="596.5" width="36" height="3.2" fill="#CCCCFF"/><rect x="2470" y="599.7" width="36" height="6.3" fill="#FFCCFF"/><rect x="2470" y="615.6" width="36" height="9.4" fill="#FFFFCC"/><rect x="2470" y="643.5" width="36" height="7.9" fill="#FFFFCC"/><rect x="2470" y="655.0" width="36" height="5.0" fill="#FFFFCC"/><rect x="2470" y="660.0" width="36" height="5.4" fill="#CCCCFF"/><rect x="2470" y="665.4" width="36" height="19.9" fill="#FFFFCC"/><rect x="2470" y="689.5" width="36" height="9.5" fill="#FFFFCC"/><rect x="2470" y="711.7" width="36" height="25.3" fill="#FFFFCC"/><rect x="2470" y="741.5" width="36" height="12.5" fill="#FFFFCC"/><rect x="2470" y="754.0" width="36" height="5.2" fill="#CCCCFF"/><rect x="2470" y="759.2" width="36" height="11.8" fill="#FFFFCC"/><rect x="2474.5" y="540.0" width="25" height="90.0" rx="12.5" fill="rgba(160,160,150,0.5)" stroke="rgba(120,120,110,0.45)" stroke-width="1.5"/><path d="M538 789.7 L543.6 796.9000000000001 L538 804.1" fill="none" stroke="#ADADAD" stroke-width="2.6"/><g transform="translate(79,840.3)"><path d="M12.8 0 H25.6 V35.4 H0 V12.6 H12.8 Z" fill="#8B959D"/><path d="M0.9 10.2 L10.4 0.6 V10.2 Z" fill="#8B959D"/><g transform="translate(8.9,12.9) scale(1.04)"><path d="M6.5 4.2 Q6.5 0.7 10.2 0.7 H14.2 Q17.7 0.7 17.7 4.2 V10.2 Q17.7 12.3 15.6 12.3 H9.6 Q7 12.3 7 15 V17.8 H4.2 Q0.7 17.8 0.7 12.3 Q0.7 7 4.4 7 H12.4 V6 H6.5 Z" fill="#3D98CF" stroke="#3A3D40" stroke-width="2"/><path d="M18.5 20.8 Q18.5 24.3 14.8 24.3 H10.8 Q7.3 24.3 7.3 20.8 V14.8 Q7.3 12.7 9.4 12.7 H15.4 Q18 12.7 18 10 V7.2 H20.8 Q24.3 7.2 24.3 12.7 Q24.3 18 20.6 18 H12.6 V19 H18.5 Z" fill="#F1BF00" stroke="#3A3D40" stroke-width="2"/><circle cx="9.8" cy="3.6" r="1.2" fill="#2C4C60"/><circle cx="15.2" cy="21.4" r="1.2" fill="#5E4E10"/></g></g><path d="M385.5 849.5 L402.5 866.7 M402.5 849.5 L385.5 866.7" stroke="#727679" stroke-width="1.9"/><rect x="201" y="892" width="2" height="526" fill="#5E5E5C"/><path d="M202 894.7 L210.5 902.5 V917 H193.5 V902.5 Z" fill="#272822" stroke="#5E5E5C" stroke-width="2"/><path d="M197 908.5 H207" stroke="#5E5E5C" stroke-width="2"/><path d="M193.5 1067.5 H210.5 V1081.4 L202 1089 L193.5 1081.4 Z" fill="#272822" stroke="#5E5E5C" stroke-width="2"/><path d="M197 1076 H207" stroke="#5E5E5C" stroke-width="2"/><rect x="193.5" y="1109.5" width="17" height="17" fill="#272822" stroke="#5E5E5C" stroke-width="2"/><path d="M197 1118 H207 M202 1113 V1123" stroke="#5E5E5C" stroke-width="2"/><circle cx="150.8" cy="991" r="8.7" fill="#3A93B8"/><circle cx="150.8" cy="991" r="4" fill="none" stroke="#23475A" stroke-width="1.8"/><path d="M163 985 V1004" stroke="#D4514C" stroke-width="2.4"/><path d="M157.6 986.5 L163 978 L168.4 986.5 Z" fill="#D4514C"/><rect x="276" y="892" width="2" height="36" fill="#474843"/><rect x="276" y="1012" width="2" height="406" fill="#474843"/><rect x="216" y="968" width="1921" height="2" fill="#535350"/><rect x="2136" y="892" width="2" height="6" fill="#4A4A46"/><rect x="2136" y="956" width="2" height="462" fill="#4A4A46"/><path d="M344.2 1342.5 L348.2 1338 L352.2 1342.5 L356.2 1338 L360.2 1342.5 L364.2 1338 L368.2 1342.5 L372.2 1338 L376.2 1342.5 L380.2 1338 L384.2 1342.5 L388.2 1338 L392.2 1342.5 L396.2 1338 L400.2 1342.5 L404.2 1338 L408.2 1342.5 " fill="none" stroke="#55A068" stroke-width="1.7"/><path d="M344.2 1384.4 L348.2 1380.4 L352.2 1384.4 L356.2 1380.4 L360.2 1384.4 L364.2 1380.4 L368.2 1384.4 L372.2 1380.4 L376.2 1384.4 L380.2 1380.4 L384.2 1384.4 L388.2 1380.4 L392.2 1384.4 L396.2 1380.4 L400.2 1384.4 L404.2 1380.4 L408.2 1384.4 L412.2 1380.4 L416.2 1384.4 L420.2 1380.4 L424.2 1384.4 L428.2 1380.4 L432.2 1384.4 L436.2 1380.4 L440.2 1384.4 L444.2 1380.4 L448.2 1384.4 L452.2 1380.4 L456.2 1384.4 L460.2 1380.4 L464.2 1384.4 L468.2 1380.4 L472.2 1384.4 L476.2 1380.4 L480.2 1384.4 L484.2 1380.4 L488.2 1384.4 L492.2 1380.4 L496.2 1384.4 L500.2 1380.4 L504.2 1384.4 L508.2 1380.4 L512.2 1384.4 L516.2 1380.4 L520.2 1384.4 L524.2 1380.4 L528.2 1384.4 L532.2 1380.4 L536.2 1384.4 L540.2 1380.4 L544.2 1384.4 L548.2 1380.4 L552.2 1384.4 L556.2 1380.4 L560.2 1384.4 L564.2 1380.4 L568.2 1384.4 L572.2 1380.4 L576.2 1384.4 L580.2 1380.4 L584.2 1384.4 L588.2 1380.4 L592.2 1384.4 L596.2 1380.4 L600.2 1384.4 L604.2 1380.4 L608.2 1384.4 L612.2 1380.4 L616.2 1384.4 L620.2 1380.4 L624.2 1384.4 L628.2 1380.4 L632.2 1384.4 L636.2 1380.4 L640.2 1384.4 L644.2 1380.4 L648.2 1384.4 L652.2 1380.4 L656.2 1384.4 L660.2 1380.4 L664.2 1384.4 L668.2 1380.4 L672.2 1384.4 L676.2 1380.4 L680.2 1384.4 L684.2 1380.4 L688.2 1384.4 L692.2 1380.4 L696.2 1384.4 L700.2 1380.4 L704.2 1384.4 L708.2 1380.4 L712.2 1384.4 L716.2 1380.4 L720.2 1384.4 L724.2 1380.4 L728.2 1384.4 L732.2 1380.4 L736.2 1384.4 L740.2 1380.4 L744.2 1384.4 L748.2 1380.4 L752.2 1384.4 L756.2 1380.4 L760.2 1384.4 L764.2 1380.4 L768.2 1384.4 L772.2 1380.4 L776.2 1384.4 L780.2 1380.4 L784.2 1384.4 L788.2 1380.4 L792.2 1384.4 L796.2 1380.4 L800.2 1384.4 L804.2 1380.4 L808.2 1384.4 L812.2 1380.4 L816.2 1384.4 L820.2 1380.4 L824.2 1384.4 L828.2 1380.4 L832.2 1384.4 L836.2 1380.4 L840.2 1384.4 L844.2 1380.4 L848.2 1384.4 L852.2 1380.4 L856.2 1384.4 L860.2 1380.4 L864.2 1384.4 L868.2 1380.4 L872.2 1384.4 L876.2 1380.4 L880.2 1384.4 L884.2 1380.4 L888.2 1384.4 " fill="none" stroke="#3A3A40" stroke-width="1.6"/><circle cx="2057.8" cy="925.8" r="12.5" fill="#FF0000"/><rect x="2055.7" y="918.6" width="4.2" height="8.1" fill="#272822"/><rect x="2055.7" y="930.2" width="4.2" height="4.6" fill="#272822"/><path d="M2143.8 911.3 L2158.8 938.8 H2128.8 Z" fill="#FFFF00"/><rect x="2141.6" y="920.2" width="4.3" height="7.5" fill="#272822"/><rect x="2141.6" y="931.3" width="4.3" height="4.5" fill="#272822"/><path d="M2215.8 911.3 L2230.8 938.8 H2200.8 Z" fill="#FFFFCC"/><rect x="2213.6" y="920.2" width="4.3" height="7.5" fill="#272822"/><rect x="2213.6" y="931.3" width="4.3" height="4.5" fill="#272822"/><path d="M2306.2 922.5 L2314.4 931 L2329.7 916.1" fill="none" stroke="#4A9E4E" stroke-width="6.2"/><path d="M2304.6 942.3 L2309.5 937 L2314.6 942 L2319.5 937 L2324.6 942 L2330 936.5" fill="none" stroke="#4A9E4E" stroke-width="2.6"/><path d="M2410 930.5 L2420 920.5 L2430 930.5" fill="none" stroke="#B2B2B2" stroke-width="3.4"/><path d="M2463.5 921.5 L2473.5 931.5 L2483.5 921.5" fill="none" stroke="#B2B2B2" stroke-width="3.4"/><rect x="2470" y="961.7" width="36" height="10.0" fill="#FF0000"/><rect x="2470" y="971.7" width="36" height="1.6" fill="#FFFFFF"/><rect x="2470" y="983.7" width="36" height="7.8" fill="#FF0000"/><rect x="2470" y="991.4" width="36" height="17.9" fill="#FFFF00"/><rect x="2470" y="1013.2" width="36" height="6.3" fill="#FFFFCC"/><rect x="2470" y="1021.1" width="36" height="5.7" fill="#0000FF"/><rect x="2470" y="1026.8" width="36" height="5.7" fill="#FFFFCC"/><rect x="2470" y="1032.5" width="36" height="8.6" fill="#CCCCFF"/><rect x="2470" y="1067.2" width="36" height="15.7" fill="#FFFFCC"/><rect x="2470" y="1083.0" width="36" height="4.2" fill="#0000FF"/><rect x="2470" y="1087.2" width="36" height="13.8" fill="#FFFFCC"/><rect x="2470" y="1101.0" width="36" height="6.4" fill="#FFFF00"/><rect x="2470" y="1107.4" width="36" height="11.8" fill="#FFFFCC"/><rect x="2470" y="1124.7" width="36" height="6.4" fill="#FFFFCC"/><rect x="2470" y="1134.9" width="36" height="7.9" fill="#FFFFCC"/><rect x="2470" y="1146.8" width="36" height="6.2" fill="#CCCCFF"/><rect x="2470" y="1156.3" width="36" height="18.3" fill="#FFFFCC"/><rect x="2470" y="1184.8" width="36" height="5.7" fill="#FFFFCC"/><rect x="2470" y="1194.3" width="36" height="10.1" fill="#FFFFCC"/><rect x="2470" y="1210.0" width="36" height="12.8" fill="#FFFF00"/><rect x="2470" y="1224.2" width="36" height="5.7" fill="#FFFF00"/><rect x="2470" y="1229.9" width="36" height="13.2" fill="#FFFFCC"/><rect x="2470" y="1243.2" width="36" height="3.2" fill="#CCCCFF"/><rect x="2470" y="1246.4" width="36" height="6.3" fill="#FFCCFF"/><rect x="2470" y="1262.2" width="36" height="9.4" fill="#FFFFCC"/><rect x="2470" y="1290.0" width="36" height="7.9" fill="#FFFFCC"/><rect x="2470" y="1301.4" width="36" height="5.0" fill="#FFFFCC"/><rect x="2470" y="1306.4" width="36" height="5.4" fill="#CCCCFF"/><rect x="2470" y="1311.8" width="36" height="19.8" fill="#FFFFCC"/><rect x="2470" y="1335.8" width="36" height="9.5" fill="#FFFFCC"/><rect x="2470" y="1357.9" width="36" height="25.2" fill="#FFFFCC"/><rect x="2470" y="1387.6" width="36" height="12.5" fill="#FFFFCC"/><rect x="2470" y="1400.1" width="36" height="5.2" fill="#CCCCFF"/><rect x="2470" y="1405.2" width="36" height="11.8" fill="#FFFFCC"/><rect x="2474.5" y="1186.9" width="25" height="89.7" rx="12.5" fill="rgba(160,160,150,0.5)" stroke="rgba(120,120,110,0.45)" stroke-width="1.5"/><path d="M538 1435.7 L543.6 1442.9 L538 1450.1000000000001" fill="none" stroke="#ADADAD" stroke-width="2.6"/><rect x="40.2" y="313.5" width="1.8" height="16" fill="#BBBBBB"/><rect x="40.2" y="576.5" width="1.8" height="17" fill="#BBBBBB"/><rect x="40.2" y="1380.5" width="1.8" height="17" fill="#BBBBBB"/><path d="M12 345 H22.5 L26.5 350.5 H39 V367.3 H12 Z" fill="#AFB1B3"/><path d="M26.5 345 H39 V352 H20.5 Z" fill="#3C3F41" opacity="0"/><g fill="#AFB1B3"><rect x="27" y="607" width="10" height="10"/><rect x="27" y="619" width="10" height="10"/><rect x="15" y="619" width="10" height="10"/></g><polygon points="25.40,1406.70 29.28,1417.36 40.62,1417.76 31.68,1424.74 34.80,1435.64 25.40,1429.30 16.00,1435.64 19.12,1424.74 10.18,1417.76 21.52,1417.36" fill="#AFB1B3"/><g fill="#AFB1B3"><ellipse cx="2531.6" cy="204.8" rx="13.3" ry="4.2"/><path d="M2518.3 208.5 Q2531.6 213.9 2545 208.5 V213.1 Q2531.6 218.5 2518.3 213.1 Z"/><path d="M2518.3 215.5 Q2531.6 220.1 2545 215.5 V219.8 Q2531.6 225.0 2518.3 219.8 Z"/><path d="M2518.3 221.9 Q2531.6 227.3 2545 221.9 V226.4 Q2531.6 233.0 2518.3 226.4 Z"/></g><g fill="#AFB1B3"><rect x="2518.1" y="426.9" width="5.2" height="4.9"/><rect x="2518.1" y="433.9" width="5.2" height="7.3"/><rect x="2518.1" y="443.6" width="5.2" height="5"/><rect x="2525.9" y="426.9" width="11.9" height="4.9"/><rect x="2525.9" y="433.9" width="11.9" height="7.3"/><rect x="2525.9" y="443.6" width="11.9" height="5"/><rect x="2540" y="426.9" width="5" height="4.9"/><rect x="2540" y="433.9" width="5" height="7.3"/><rect x="2540" y="443.6" width="5" height="5"/></g><rect x="118.8" y="1508.5" width="17" height="1.8" fill="#BBBBBB"/><circle cx="94" cy="1492.2" r="12.7" fill="#AFB1B3"/><rect x="92" y="1484" width="4" height="9.5" fill="#3C3F41"/><rect x="92" y="1496" width="4" height="3.8" fill="#3C3F41"/><path d="M356 1484 Q356 1480.2 360 1480.2 H367.8 Q371.8 1480.2 371.8 1484 V1490 H376 V1492.6 H371.8 V1494.5 Q374 1495.5 373.5 1498 Q373 1499.5 371 1500 L368.5 1502.4 Q373.5 1503.5 375 1507 H352.6 Q354 1503.5 359.5 1502.4 L357 1500 Q355 1499.5 354.5 1498 Q354 1495.5 356 1494.5 V1492.6 H351.6 V1490 H356 Z" fill="#AFB1B3"/><rect x="746" y="1508.5" width="17" height="1.8" fill="#BBBBBB"/><g fill="#AFB1B3"><rect x="711" y="1480" width="4.8" height="27"/><rect x="711" y="1494.6" width="19" height="5.6"/><rect x="725.2" y="1489" width="4.7" height="11.2"/><path d="M719.6 1490.3 L727.7 1480.5 L735.8 1490.3 Z"/></g><rect x="876.2" y="1480.1" width="26.9" height="24.7" fill="#AFB1B3"/><path d="M881 1485 L886.6 1490.9 L881 1496.7" fill="none" stroke="#3C3F41" stroke-width="2.2"/><rect x="889" y="1497.6" width="9" height="2.1" fill="#3C3F41"/><defs><linearGradient id="rg" x1="0" y1="0" x2="0" y2="1"><stop offset="0" stop-color="#9BDDFA"/><stop offset="0.5" stop-color="#86C2F0"/><stop offset="1" stop-color="#5283CC"/></linearGradient></defs><rect x="1090" y="1478.5" width="31.4" height="31.5" rx="4" fill="url(#rg)"/><text x="1105.7" y="1499" font-family="Liberation Mono" font-weight="700" font-size="15" fill="#0A1520" text-anchor="middle" letter-spacing="-1">(.*)</text><g transform="translate(1377.1,1479.1) scale(1.144)"><path d="M6.5 4.2 Q6.5 0.7 10.2 0.7 H14.2 Q17.7 0.7 17.7 4.2 V10.2 Q17.7 12.3 15.6 12.3 H9.6 Q7 12.3 7 15 V17.8 H4.2 Q0.7 17.8 0.7 12.3 Q0.7 7 4.4 7 H12.4 V6 H6.5 Z" fill="#AFB1B3" stroke="#3C3F41" stroke-width="1.3"/><path d="M18.5 20.8 Q18.5 24.3 14.8 24.3 H10.8 Q7.3 24.3 7.3 20.8 V14.8 Q7.3 12.7 9.4 12.7 H15.4 Q18 12.7 18 10 V7.2 H20.8 Q24.3 7.2 24.3 12.7 Q24.3 18 20.6 18 H12.6 V19 H18.5 Z" fill="#AFB1B3" stroke="#3C3F41" stroke-width="1.3"/></g><g fill="#AFB1B3"><rect x="1697" y="1483" width="4.8" height="4.3"/><rect x="1704" y="1483" width="17" height="4.3"/><rect x="1697" y="1490.7" width="4.8" height="4.3"/><rect x="1704" y="1490.7" width="17" height="4.3"/><rect x="1697" y="1498.4" width="4.8" height="4.3"/><rect x="1704" y="1498.4" width="17" height="4.3"/></g><path d="M2313.7 1478 A15.7 15.7 0 1 0 2329.5 1494 V1509.4 H2313.7 Z" fill="#F0A30A"/><path d="M2313.7 1478 A15.7 15.7 0 0 1 2329.5 1494 V1509.4 H2313.7 A15.7 15.7 0 0 1 2313.7 1478 Z" fill="#F0A30A"/><path d="M2309.1 1489.2 L2313.8 1486.2 H2316.7 V1501.9 H2313.3 V1490.6 L2309.1 1492.4 Z" fill="#23282C"/><path d="M21 1532.5 H44 V1555.5 H21 Z" fill="none" stroke="#AFB1B3" stroke-width="2.2"/><path d="M16 1538 V1560.5 H38.5" fill="none" stroke="#AFB1B3" stroke-width="2.2"/><g fill="none" stroke="#AFB1B3" stroke-width="3.4"><path d="M2193.5 1533 V1559"/><path d="M2209 1534 V1540 Q2209 1547 2194 1552"/></g><g fill="#AFB1B3"><circle cx="2193.5" cy="1533" r="4.2"/><circle cx="2209" cy="1534" r="4.2"/><circle cx="2193.5" cy="1559" r="4.2"/></g><rect x="2446" y="1543" width="19.7" height="15" fill="#AFB1B3"/><path d="M2440 1545 V1539 A7.5 7.5 0 0 1 2455 1539 V1543" fill="none" stroke="#AFB1B3" stroke-width="3"/><circle cx="2515.7" cy="1546" r="15" fill="#59595A"/><rect x="2513.7" y="1537" width="4" height="10.5" fill="#3C3F41"/><rect x="2513.7" y="1550.5" width="4" height="4" fill="#3C3F41"/></svg>
</div>
</body></html>
